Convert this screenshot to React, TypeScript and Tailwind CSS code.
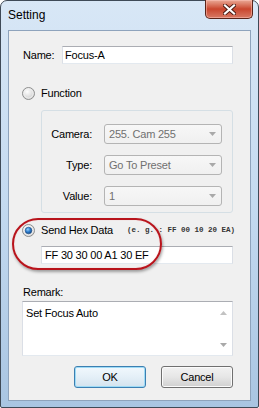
import React from "react";

const font = { fontFamily: '"Liberation Sans", Arial, sans-serif' };

function Radio({ checked }: { checked?: boolean }) {
  return (
    <svg width="13" height="13" viewBox="0 0 13 13" className="shrink-0">
      <defs>
        <radialGradient id={checked ? "rgc" : "rgu"} cx="0.4" cy="0.35" r="0.7">
          <stop offset="0" stopColor="#ffffff" />
          <stop offset="1" stopColor="#c9c9c9" />
        </radialGradient>
        <radialGradient id="dot" cx="0.4" cy="0.35" r="0.7">
          <stop offset="0" stopColor="#9cd2f7" />
          <stop offset="0.5" stopColor="#2f7fd0" />
          <stop offset="1" stopColor="#11457f" />
        </radialGradient>
      </defs>
      <circle cx="6.5" cy="6.5" r="6" fill={`url(#${checked ? "rgc" : "rgu"})`} stroke="#8e8f8f" strokeWidth="1" />
      <circle cx="6.5" cy="6.5" r="4.6" fill="none" stroke="#f4f4f4" strokeWidth="0.8" />
      {checked && <circle cx="6.5" cy="6.5" r="3.3" fill="url(#dot)" stroke="#1c4e86" strokeWidth="0.6" />}
    </svg>
  );
}

function Arrow({ up }: { up?: boolean }) {
  return (
    <svg width="7" height="4" viewBox="0 0 7 4">
      {up ? <polygon points="0,4 7,4 3.5,0" fill="#c2c2c2" /> : <polygon points="0,0 7,0 3.5,4" fill="#a9a9a9" />}
    </svg>
  );
}

function Combo({ label, value }: { label: string; value: string }) {
  return (
    <div className="flex items-center h-[20px]">
      <div className="w-[50px] text-right text-black">{label}</div>
      <div className="ml-[12px] w-[118px] h-[20px] border border-[#b4b4b4] rounded-[3px] bg-gradient-to-b from-[#f7f7f7] to-[#f0f0f0] flex items-center pl-[4px] pr-[5px] text-[#707070]">
        <span className="flex-1">{value}</span>
        <Arrow />
      </div>
    </div>
  );
}

export default function App() {
  return (
    <div className="w-[259px] h-[408px] text-[11px] tracking-[-0.2px]" style={font}>
      <div className="w-[259px] h-[408px] border border-[#3f4a57] rounded-t-[7px] rounded-b-[2px] bg-gradient-to-b from-[#d8e7f6] via-[#c4daf0] to-[#a9c5e2] flex flex-col">
        {/* Title bar */}
        <div className="h-[29px] flex items-start">
          <div className="pl-[7px] pt-[7px] text-[12px] leading-[15px] text-black tracking-normal flex-1">Setting</div>
          <div className="mr-[5px] w-[48px] h-[19px] -mt-[1px] rounded-b-[5px] border border-[#5a2419] border-t-0 bg-gradient-to-b from-[#e9a896] via-[#c9452d] to-[#d77863] flex items-center justify-center shadow-[inset_0_0_0_1px_rgba(255,200,190,0.5)]">
            <svg width="13" height="11" viewBox="0 0 13 11">
              <path d="M2 1.5 L11 9.5 M11 1.5 L2 9.5" stroke="#4a1a12" strokeWidth="4" strokeLinecap="square" />
              <path d="M2 1.5 L11 9.5 M11 1.5 L2 9.5" stroke="#ffffff" strokeWidth="2.2" strokeLinecap="square" />
            </svg>
          </div>
        </div>
        {/* Client */}
        <div className="mx-[7px] h-[371px] border border-[#8ea3bc] bg-[#f0f0f0] relative flex flex-col text-black">
          {/* Name */}
          <div className="mt-[15px] flex items-center h-[18px]">
            <span className="ml-[14px] w-[39px]">Name:</span>
            <div className="w-[171px] h-[18px] border border-[#abadb3] border-b-[#e3e9ef] border-x-[#dbdfe6] bg-white pl-[2px] flex items-center">Focus-A</div>
          </div>
          {/* Function radio */}
          <div className="mt-[23px] flex items-center h-[13px] ml-[13px]">
            <Radio />
            <span className="ml-[6px]">Function</span>
          </div>
          {/* Group */}
          <div className="mt-[10px] ml-[32px] w-[192px] h-[103px] border border-[#d5dfe5] rounded-[3px] flex flex-col gap-[11px] pt-[13px]">
            <Combo label="Camera:" value="255. Cam 255" />
            <Combo label="Type:" value="Go To Preset" />
            <Combo label="Value:" value="1" />
          </div>
          {/* Send Hex */}
          <div className="mt-[11px] flex items-center h-[13px] ml-[13px]">
            <Radio checked />
            <span className="ml-[6px]">Send Hex Data</span>
            <span className="ml-[14px] text-[7.5px] tracking-normal text-[#333]" style={{ fontFamily: '"Liberation Mono", monospace', fontWeight: 700 }}>
              (e. g. : FF 00 10 20 EA)
            </span>
          </div>
          <div className="mt-[9px] ml-[32px] w-[192px] h-[18px] border border-[#abadb3] border-b-[#e3e9ef] border-x-[#dbdfe6] bg-white pl-[3px] flex items-center">
            FF 30 30 00 A1 30 EF
          </div>
          {/* Remark */}
          <div className="mt-[21px] ml-[14px] leading-[14px] h-[14px]">Remark:</div>
          <div className="mt-[2px] ml-[13px] w-[211px] h-[55px] border border-[#abadb3] border-b-[#e3e9ef] border-x-[#dbdfe6] bg-white flex">
            <div className="flex-1 pl-[3px] pt-[4px] leading-[14px]">Set Focus Auto</div>
            <div className="w-[17px] flex flex-col items-center justify-between pt-[9px] pb-[8px]">
              <Arrow up />
              <Arrow />
            </div>
          </div>
          {/* Buttons */}
          <div className="mt-[10px] flex ml-[65px] gap-[15px]">
            <div className="w-[72px] h-[22px] rounded-[3px] border border-[#3c7fb1] bg-gradient-to-b from-[#f1f8fd] via-[#e4eff7] to-[#d3e3ee] shadow-[inset_0_0_0_1px_#9edbf6] flex items-center justify-center">OK</div>
            <div className="w-[72px] h-[22px] rounded-[3px] border border-[#707070] bg-gradient-to-b from-[#f2f2f2] via-[#e6e6e6] to-[#d0d0d0] shadow-[inset_0_0_0_1px_#fbfbfb] flex items-center justify-center">Cancel</div>
          </div>
          {/* Red highlight ellipse */}
          <div className="absolute left-[3px] top-[187px] w-[150px] h-[52px] rounded-[26px] border-2 border-[#b8141c] shadow-[1px_2px_3px_rgba(0,0,0,0.35),inset_0_0_1px_rgba(255,120,120,0.6)] pointer-events-none" />
        </div>
      </div>
    </div>
  );
}
